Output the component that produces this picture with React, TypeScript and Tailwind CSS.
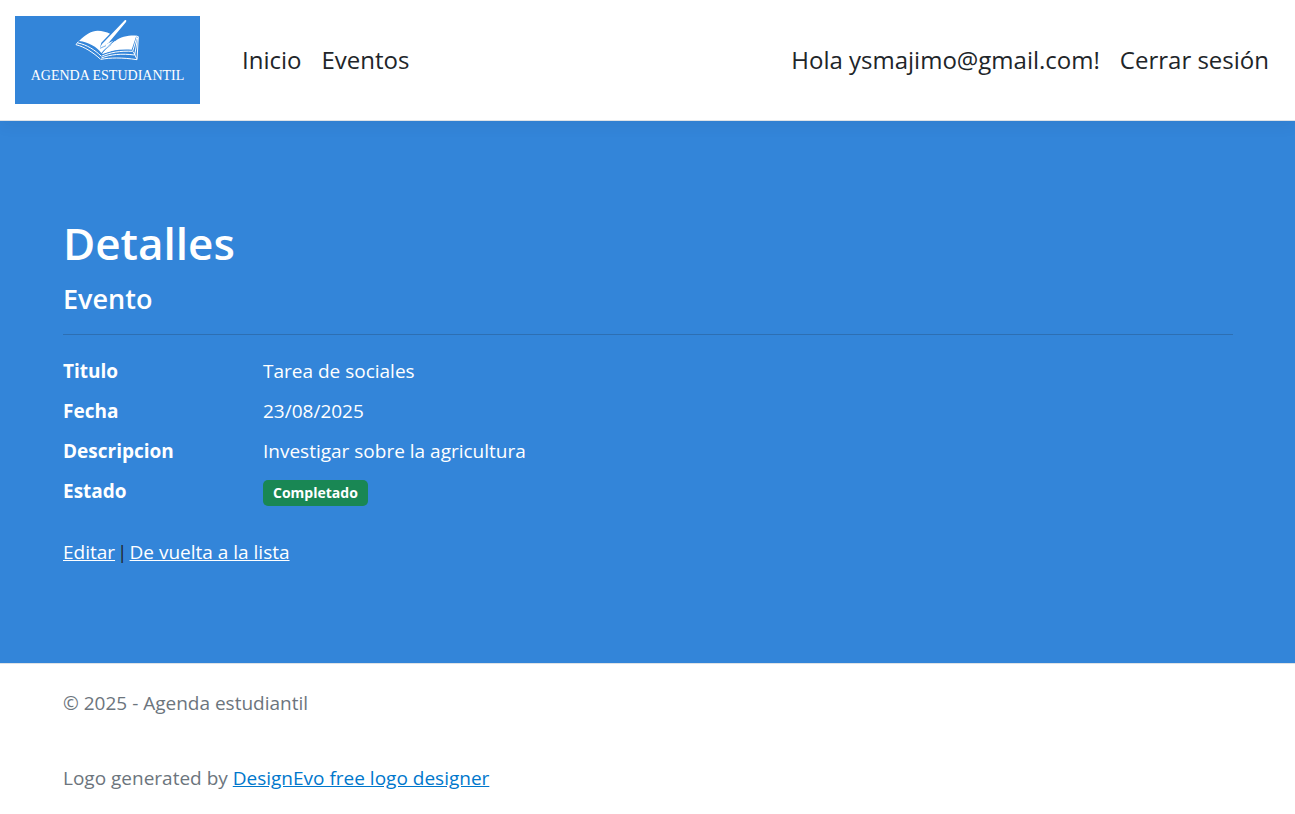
import React from "react";

const event = [
  { label: "Titulo", value: "Tarea de sociales" },
  { label: "Fecha", value: "23/08/2025" },
  { label: "Descripcion", value: "Investigar sobre la agricultura" },
];

function BookIcon() {
  return (
    <svg viewBox="222 57 198 126" className="mr-[2px] h-[42px] w-[66px]" aria-hidden="true">
      <g fill="#fff">
        <path d="M237 123 C256 104 275 92 293 92 C307 92 320 96 330 101 L304 128 L300 143 L312 136 L340 122 L304 159 C291 141 266 126 237 123 Z" />
        <path d="M345 124 C362 110 385 106 409 107 L395 149 C360 147 330 151 306 162 Z" />
        <path d="M322 140 L345 123 L345 150 L306 162 Z" />
        <path d="M375 60 C379 59 380 62 378 66 L326 128 C320 134 310 137 299 145 C303 137 306 131 312 126 Z" />
      </g>
      <g fill="none" stroke="#fff" strokeWidth="3">
        <path d="M235 125 L228 134 C255 141 280 158 302 178" />
        <path d="M234 129 C260 134 285 150 303 168" />
        <path d="M304 169 C330 157 362 152 398 154 L411 110" />
        <path d="M304 174 C332 163 365 160 404 165 L413 113" />
        <path d="M303 178 C330 173 365 172 411 179 L415 110 L408 108" />
        <path d="M400 155 L410 176" />
      </g>
      <path d="M300 145 L318 137" fill="none" stroke="#3385d9" strokeWidth="2" />
      <path d="M308 155 L334 133" fill="none" stroke="#3385d9" strokeWidth="2" />
    </svg>
  );
}

export default function App() {
  return (
    <div className="min-h-screen bg-white font-['Segoe_UI','Open_Sans',sans-serif] text-[19px] leading-[30px] text-[#212529]">
      <header className="relative border-b border-[#dee2e6] bg-white shadow-[0_5px_15px_rgba(0,0,0,0.05)]">
        <nav className="flex items-center py-4 pr-[26px] pl-[15px] text-[24px] leading-9">
          <a
            href="#"
            className="mr-[42px] flex h-[88px] w-[185px] shrink-0 flex-col items-center bg-[#3385d9] pt-[3px] text-white"
          >
            <BookIcon />
            <span className="mt-1 font-['Liberation_Serif',serif] text-[14px] leading-[22px] whitespace-nowrap">
              AGENDA ESTUDIANTIL
            </span>
          </a>
          <div className="flex grow items-center gap-5">
            <a href="#">Inicio</a>
            <a href="#">Eventos</a>
          </div>
          <div className="flex items-center gap-5">
            <span>Hola ysmajimo@gmail.com!</span>
            <button type="button">Cerrar sesión</button>
          </div>
        </nav>
      </header>

      <main className="bg-[#3385d9] pt-[92px] pr-[62px] pb-24 pl-[63px] text-white">
        <h1 className="text-[44px] leading-[60px] font-semibold">Detalles</h1>
        <h2 className="mt-2 text-[27px] leading-9 font-semibold">Evento</h2>
        <hr className="mt-[17px] border-[#2d6fb3]" />
        <dl className="mt-[21px] grid grid-cols-[200px_1fr] gap-y-[10px]">
          {event.map((row) => (
            <React.Fragment key={row.label}>
              <dt className="font-bold">{row.label}</dt>
              <dd>{row.value}</dd>
            </React.Fragment>
          ))}
          <dt className="font-bold">Estado</dt>
          <dd className="flex items-center">
            <span className="mt-1 rounded-[5px] bg-[#198754] px-[10px] text-[14px] leading-[26px] font-bold">
              Completado
            </span>
          </dd>
        </dl>
        <div className="mt-[31px] flex gap-0.5">
          <a href="#" className="underline">Editar</a>
          <span className="text-[#212529]">|</span>
          <a href="#" className="underline">De vuelta a la lista</a>
        </div>
      </main>

      <footer className="border-t border-[#dee2e6] px-[63px] pt-6 text-[#6c757d]">
        <p>© 2025 - Agenda estudiantil</p>
        <p className="mt-[45px]">
          Logo generated by{" "}
          <a href="#" className="text-[#0077cc] underline">DesignEvo free logo designer</a>
        </p>
      </footer>
    </div>
  );
}
